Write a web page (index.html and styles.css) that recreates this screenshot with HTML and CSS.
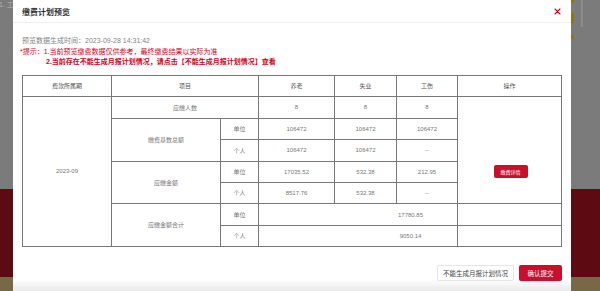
FILE: index.html
```html
<!DOCTYPE html>
<html lang="zh-CN">
<head>
<meta charset="utf-8">
<title>缴费计划预览</title>
<link rel="stylesheet" href="styles.css">
</head>
<body>
<div class="page">
  <div class="side-left"><span class="peek">1. 工</span></div>
  <div class="modal">
    <div class="modal-header">
      <span class="title">缴费计划预览</span>
      <svg class="close" width="7" height="7" viewBox="0 0 7 7"><path d="M1 1L6 6M6 1L1 6" stroke="#d0021b" stroke-width="1.1" stroke-linecap="round"/></svg>
    </div>
    <div class="modal-body">
      <div class="info">
        <div class="time">预览数据生成时间：2023-09-28 14:31:42</div>
        <div class="tip">*提示：1.当前预览缴费数据仅供参考，最终缴费结果以实际为准</div>
        <div class="tip tip2">2.当前存在不能生成月报计划情况，请点击【不能生成月报计划情况】查看</div>
      </div>
      <div class="grid">
        <div class="c th" style="grid-area:1/1/2/2">费款所属期</div>
        <div class="c th" style="grid-area:1/2/2/4">项目</div>
        <div class="c th" style="grid-area:1/4/2/5">养老</div>
        <div class="c th" style="grid-area:1/5/2/6">失业</div>
        <div class="c th" style="grid-area:1/6/2/7">工伤</div>
        <div class="c th" style="grid-area:1/7/2/8">操作</div>

        <div class="c" style="grid-area:2/1/9/2">2023-09</div>

        <div class="c" style="grid-area:2/2/3/4">应缴人数</div>
        <div class="c" style="grid-area:2/4/3/5">8</div>
        <div class="c" style="grid-area:2/5/3/6">8</div>
        <div class="c" style="grid-area:2/6/3/7">8</div>

        <div class="c" style="grid-area:3/2/5/3">缴费基数总额</div>
        <div class="c" style="grid-area:3/3/4/4">单位</div>
        <div class="c" style="grid-area:3/4/4/5">106472</div>
        <div class="c" style="grid-area:3/5/4/6">106472</div>
        <div class="c" style="grid-area:3/6/4/7">106472</div>
        <div class="c" style="grid-area:4/3/5/4">个人</div>
        <div class="c" style="grid-area:4/4/5/5">106472</div>
        <div class="c" style="grid-area:4/5/5/6">106472</div>
        <div class="c" style="grid-area:4/6/5/7">--</div>

        <div class="c" style="grid-area:5/2/7/3">应缴金额</div>
        <div class="c" style="grid-area:5/3/6/4">单位</div>
        <div class="c" style="grid-area:5/4/6/5">17035.52</div>
        <div class="c" style="grid-area:5/5/6/6">532.38</div>
        <div class="c" style="grid-area:5/6/6/7">212.95</div>
        <div class="c" style="grid-area:6/3/7/4">个人</div>
        <div class="c" style="grid-area:6/4/7/5">8517.76</div>
        <div class="c" style="grid-area:6/5/7/6">532.38</div>
        <div class="c" style="grid-area:6/6/7/7">--</div>

        <div class="c" style="grid-area:7/2/9/3">应缴金额合计</div>
        <div class="c" style="grid-area:7/3/8/4">单位</div>
        <div class="c" style="grid-area:7/4/8/7"></div>
        <div class="c" style="grid-area:8/3/9/4">个人</div>
        <div class="c" style="grid-area:8/4/9/7"></div>

        <div class="c" style="grid-area:2/7/7/8"></div>
        <div class="c" style="grid-area:7/7/8/8"></div>
        <div class="c" style="grid-area:8/7/9/8"></div>

        <div class="total" style="grid-area:7/4/8/8">17780.85</div>
        <div class="total" style="grid-area:8/4/9/8">9050.14</div>

        <div class="detail-wrap" style="grid-area:2/7/9/8"><span class="btn-detail">缴费详情</span></div>
      </div>
    </div>
    <div class="modal-footer">
      <span class="btn btn-plain">不能生成月报计划情况</span>
      <span class="btn btn-primary">确认提交</span>
    </div>
  </div>
  <div class="side-right">
    <div class="gold">
      <span class="g g1"></span>
      <span class="g g2"></span>
      <span class="g g3"></span>
    </div>
    <div class="scroll"></div>
  </div>
</div>
</body>
</html>
```

FILE: styles.css
```css
* { box-sizing: border-box; }
html, body { margin: 0; padding: 0; }
body {
  width: 600px;
  height: 291px;
  overflow: hidden;
  font-family: "Liberation Sans", "Noto Sans CJK SC", sans-serif;
  background: linear-gradient(to bottom, #7b7b7b 0, #7b7b7b 189px, #5d0a12 189px, #5d0a12 277px, #776848 277px, #776848 291px);
}
.page {
  display: flex;
  height: 291px;
}
.side-left {
  width: 13px;
  flex: none;
  overflow: hidden;
}
.peek {
  display: block;
  white-space: nowrap;
  font-size: 7px;
  line-height: 10px;
  color: #b0b0b0;
  margin-left: -1px;
}
.modal {
  width: 558px;
  flex: none;
  height: 291px;
  background: linear-gradient(to bottom, #ffffff 0, #ffffff 279px, #e9e9e9 291px);
  display: flex;
  flex-direction: column;
}
.modal-header {
  height: 23px;
  flex: none;
  border-bottom: 1px solid #efefef;
  display: flex;
  align-items: center;
  justify-content: space-between;
  padding: 0 10px 0 9px;
}
.title {
  font-size: 8px;
  font-weight: bold;
  color: #333;
  margin-top: 1px;
}
.close { display: block; margin-top: 1px; }
.modal-body {
  padding: 13px 9px 0 9px;
}
.info {
  font-size: 7px;
  line-height: 10.5px;
  margin-bottom: 7px;
}
.time { color: #858585; }
.tip { color: #d0021b; margin-left: -2px; }
.tip2 { font-weight: bold; margin-left: 24px; }
.grid {
  display: grid;
  grid-template-columns: 89px 109px 38px 76px 62px 61px 104px;
  grid-template-rows: 21px 22px 21px 22px 21px 21px 22px 21px;
  border-top: 1px solid #777;
  border-left: 1px solid #777;
  width: 540px;
}
.c {
  border-right: 1px solid #777;
  border-bottom: 1px solid #777;
  display: flex;
  align-items: center;
  justify-content: center;
  font-size: 6px;
  color: #777;
}
.th { color: #555; }
.total {
  display: flex;
  align-items: center;
  justify-content: center;
  font-size: 6px;
  color: #777;
  z-index: 1;
}
.detail-wrap {
  display: flex;
  align-items: center;
  justify-content: center;
  z-index: 1;
}
.btn-detail {
  width: 34px;
  height: 13px;
  background: #c8102e;
  color: #fff;
  font-size: 5px;
  border-radius: 2px;
  display: flex;
  align-items: center;
  justify-content: center;
  margin-left: 1px;
}
.modal-footer {
  display: flex;
  justify-content: flex-end;
  gap: 5px;
  padding: 0 9px 0 0;
  margin-top: 18px;
}
.btn {
  height: 16px;
  display: flex;
  align-items: center;
  justify-content: center;
  font-size: 6.5px;
  border-radius: 2px;
}
.btn-plain {
  width: 77px;
  border: 1px solid #e6e6e6;
  color: #444;
  background: #fff;
}
.btn-primary {
  width: 43px;
  background: #c8102e;
  color: #fff;
}
.side-right {
  flex: 1;
  display: flex;
}
.gold {
  width: 4px;
  display: flex;
  flex-direction: column;
}
.g { display: block; background: #8f7420; width: 3px; }
.g1 { height: 3px; margin-top: 0; }
.g2 { height: 10px; margin-top: 10px; }
.g3 { height: 4px; margin-top: 12px; }
.scroll {
  width: 2px;
  height: 27px;
  background: #8c8c8c;
  margin-left: 6px;
}
```
